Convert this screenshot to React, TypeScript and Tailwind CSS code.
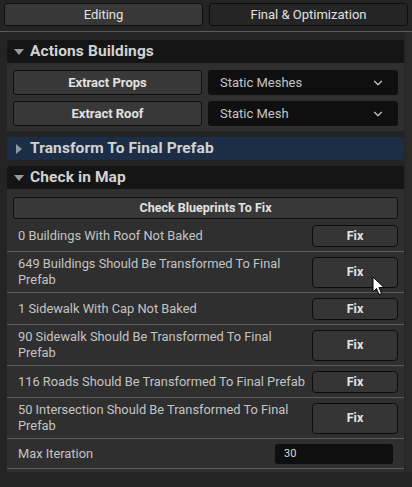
import { ChevronDown } from 'lucide-react';

const font = { fontFamily: 'Roboto, "Liberation Sans", sans-serif' };

function Header({ title, open, blue }: { title: string; open: boolean; blue?: boolean }) {
  return (
    <div
      className={`h-[23px] flex items-center rounded-t-[3px] ${blue ? 'bg-[#1b2e45] rounded-b-[3px]' : 'bg-[#151515]'}`}
    >
      <span className="w-[23px] flex justify-center">
        {open ? (
          <svg width="10" height="6" viewBox="0 0 10 6">
            <path d="M0 0 L10 0 L5 6 Z" fill="#9a9a9a" />
          </svg>
        ) : (
          <svg width="6" height="10" viewBox="0 0 6 10">
            <path d="M0 0 L6 5 L0 10 Z" fill="#8a97a6" />
          </svg>
        )}
      </span>
      <span className="text-[15.5px] font-bold text-[#d2d2d2] tracking-[0.1px]">{title}</span>
    </div>
  );
}

function FixButton({ tall }: { tall?: boolean }) {
  return (
    <button
      className={`w-[86px] ${tall ? 'h-[31px]' : 'h-[22px]'} shrink-0 rounded-[4px] border border-[#0c0c0c] bg-[#353535] text-[12.5px] font-bold text-[#e4e4e4]`}
    >
      Fix
    </button>
  );
}

function Row({ text, tall, first }: { text: string; tall?: boolean; first?: boolean }) {
  const size = tall ? 'h-[41px]' : first ? 'h-[33px] pt-[2px]' : 'h-[32px] pt-px';
  return (
    <div
      className={`border-b border-[#5c5c5c] flex items-center justify-between pl-[11px] pr-[6px] ${size}`}
    >
      <span className="text-[12.85px] leading-[16.5px] text-[#c4c4c4] w-[292px] shrink-0">{text}</span>
      <FixButton tall={tall} />
    </div>
  );
}

export default function App() {
  return (
    <div className="w-[412px] h-[487px] bg-[#242424] relative overflow-hidden" style={font}>
      <div className="flex gap-[6px] px-[4px] pt-[3px]">
        <button className="flex-1 h-[23px] rounded-[3px] border border-[#0e0e0e] bg-[#383838] text-[13px] text-[#e2e2e2]">
          Editing
        </button>
        <button className="flex-1 h-[23px] rounded-[3px] border border-[#0e0e0e] bg-[#252525] text-[13px] text-[#e2e2e2]">
          Final &amp; Optimization
        </button>
      </div>
      <div className="mt-[5px] h-px bg-[#5a5a5a]" />

      <div className="flex">
        <div className="ml-[7px] w-[397px] pt-[8px]">
          <Header title="Actions Buildings" open />
          <div className="bg-[#2f2f2f] pt-[7px] pb-[5px] px-[6px] flex flex-col gap-[6px]">
            {[
              ['Extract Props', 'Static Meshes'],
              ['Extract Roof', 'Static Mesh'],
            ].map(([b, d]) => (
              <div key={b} className="flex gap-[6px]">
                <button className="w-[189px] h-[25px] rounded-[3px] border border-[#0e0e0e] bg-[#383838] text-[13px] font-bold text-[#e2e2e2]">
                  {b}
                </button>
                <div className="w-[190px] h-[25px] rounded-[3px] bg-[#0f0f0f] flex items-center justify-between pl-[12px] pr-[13px]">
                  <span className="text-[13px] text-[#c4c4c4]">{d}</span>
                  <ChevronDown size={14} color="#c8c8c8" strokeWidth={2} />
                </div>
              </div>
            ))}
          </div>

          <div className="mt-[6px]">
            <Header title="Transform To Final Prefab" open={false} blue />
          </div>

          <div className="mt-[6px]">
            <Header title="Check in Map" open />
            <div className="bg-[#2f2f2f] pt-[6px] pb-[3px]">
              <div className="px-[6px]">
                <button className="w-full h-[22px] rounded-[3px] border border-[#0e0e0e] bg-[#383838] text-[12.5px] font-bold text-[#e2e2e2]">
                  Check Blueprints To Fix
                </button>
              </div>
              <Row text="0 Buildings With Roof Not Baked" first />
              <Row text="649 Buildings Should Be Transformed To Final Prefab" tall />
              <Row text="1 Sidewalk With Cap Not Baked" />
              <Row text="90 Sidewalk Should Be Transformed To Final Prefab" tall />
              <Row text="116 Roads Should Be Transformed To Final Prefab" />
              <Row text="50 Intersection Should Be Transformed To Final Prefab" tall />
              <div className="border-b border-[#5c5c5c] flex items-center justify-between pl-[11px] pr-[11px] pt-[5px] pb-[4px]">
                <span className="text-[12.85px] leading-[16px] text-[#c4c4c4]">Max Iteration</span>
                <div className="w-[118px] h-[20px] rounded-[3px] bg-[#0f0f0f] flex items-center pl-[9px]">
                  <span className="text-[11px] text-[#d8d8d8]">30</span>
                </div>
              </div>
            </div>
          </div>
        </div>
        <div className="ml-px w-[7px] bg-[#2a2a2a]" />
      </div>

      <svg
        className="absolute left-[372px] top-[276px]"
        width="13"
        height="20"
        viewBox="0 0 13 20"
      >
        <path d="M1 1 L1 16 L4.5 12.5 L7 18.5 L9.5 17.5 L7 11.5 L12 11.5 Z" fill="#ffffff" stroke="#000000" strokeWidth="1" />
      </svg>
    </div>
  );
}
